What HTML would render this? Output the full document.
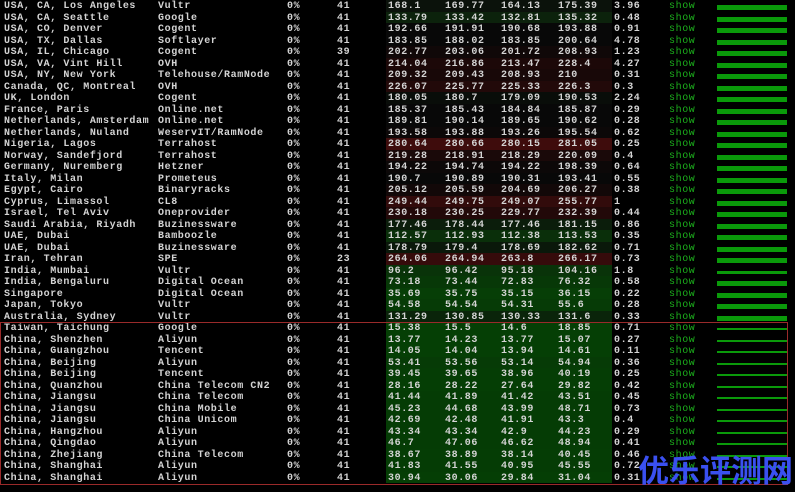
<!DOCTYPE html>
<html><head><meta charset="utf-8"><style>
body{margin:0;background:#000;width:795px;height:492px;overflow:hidden;position:relative;font-family:"Liberation Mono","DejaVu Sans Mono",monospace;font-size:10px;color:#d4d4d4;letter-spacing:0.6px;font-weight:bold}
.r{position:absolute;left:0;width:795px;height:11.5px;line-height:13px;white-space:pre}
.r span{position:absolute;top:0}
.bg{position:absolute;left:386px;width:226px;top:0;height:11.5px}
.bar{position:absolute;left:717px;width:70px;background:#0a9a0a}
.show{color:#1cb01c;font-weight:normal}
#box{position:absolute;left:0;top:322px;width:786px;height:161px;border:1px solid #9a2a2a}
#wm{position:absolute;left:638px;top:446px;font-family:"Noto Sans CJK SC",sans-serif;font-weight:bold;font-size:31px;color:#3a50f0;letter-spacing:0}
</style></head><body>
<div id="rows"></div>
<div id="box"></div>
<div id="wm">优乐评测网</div>
<script>
var d=[
["USA, CA, Los Angeles","Vultr","41","168.1","169.77","164.13","175.39","3.96","#0b120b",5],
["USA, CA, Seattle","Google","41","133.79","133.42","132.81","135.32","0.48","#0c220c",5],
["USA, CO, Denver","Cogent","41","192.66","191.91","190.68","193.88","0.91","#080808",5],
["USA, TX, Dallas","Softlayer","41","183.85","188.02","183.85","200.64","4.78","#080808",5],
["USA, IL, Chicago","Cogent","39","202.77","203.06","201.72","208.93","1.23","#100808",5],
["USA, VA, Vint Hill","OVH","41","214.04","216.86","213.47","228.4","4.27","#1c0808",5],
["USA, NY, New York","Telehouse/RamNode","41","209.32","209.43","208.93","210","0.31","#180808",5],
["Canada, QC, Montreal","OVH","41","226.07","225.77","225.33","226.3","0.3","#220909",5],
["UK, London","Cogent","41","180.05","180.7","179.09","190.53","2.24","#090d09",5],
["France, Paris","Online.net","41","185.37","185.43","184.84","185.87","0.29","#080808",5],
["Netherlands, Amsterdam","Online.net","41","189.81","190.14","189.65","190.62","0.28","#080808",5],
["Netherlands, Nuland","WeservIT/RamNode","41","193.58","193.88","193.26","195.54","0.62","#0c0808",5],
["Nigeria, Lagos","Terrahost","41","280.64","280.66","280.15","281.05","0.25","#3e0c0c",5],
["Norway, Sandefjord","Terrahost","41","219.28","218.91","218.29","220.09","0.4","#1a0909",5],
["Germany, Nuremberg","Hetzner","41","194.22","194.74","194.22","198.39","0.64","#0c0808",5],
["Italy, Milan","Prometeus","41","190.7","190.89","190.31","193.41","0.55","#080808",5],
["Egypt, Cairo","Binaryracks","41","205.12","205.59","204.69","206.27","0.38","#120808",5],
["Cyprus, Limassol","CL8","41","249.44","249.75","249.07","255.77","1","#320b0b",5],
["Israel, Tel Aviv","Oneprovider","41","230.18","230.25","229.77","232.39","0.44","#220909",5],
["Saudi Arabia, Riyadh","Buzinessware","41","177.46","178.44","177.46","181.15","0.86","#0b1d0b",5],
["UAE, Dubai","Bamboozle","41","112.57","112.93","112.38","113.53","0.35","#0a2f0a",5],
["UAE, Dubai","Buzinessware","41","178.79","179.4","178.69","182.62","0.71","#0a180a",5],
["Iran, Tehran","SPE","23","264.06","264.94","263.8","266.17","0.73","#360b0b",5],
["India, Mumbai","Vultr","41","96.2","96.42","95.18","104.16","1.8","#093309",3],
["India, Bengaluru","Digital Ocean","41","73.18","73.44","72.83","76.32","0.58","#073807",5],
["Singapore","Digital Ocean","41","35.69","35.75","35.15","36.15","0.22","#063e06",5],
["Japan, Tokyo","Vultr","41","54.58","54.54","54.31","55.6","0.28","#063b06",5],
["Australia, Sydney","Vultr","41","131.29","130.85","130.33","131.6","0.33","#0a240a",5],
["Taiwan, Taichung","Google","41","15.38","15.5","14.6","18.85","0.71","#053f05",2],
["China, Shenzhen","Aliyun","41","13.77","14.23","13.77","15.07","0.27","#053f05",2],
["China, Guangzhou","Tencent","41","14.05","14.04","13.94","14.61","0.11","#053f05",2],
["China, Beijing","Aliyun","41","53.41","53.56","53.14","54.94","0.36","#063b06",2],
["China, Beijing","Tencent","41","39.45","39.65","38.96","40.19","0.25","#053d05",2],
["China, Quanzhou","China Telecom CN2","41","28.16","28.22","27.64","29.82","0.42","#053e05",2],
["China, Jiangsu","China Telecom","41","41.44","41.89","41.42","43.51","0.45","#053c05",2],
["China, Jiangsu","China Mobile","41","45.23","44.68","43.99","48.71","0.73","#053c05",2],
["China, Jiangsu","China Unicom","41","42.69","42.48","41.91","43.3","0.4","#053c05",2],
["China, Hangzhou","Aliyun","41","43.34","43.34","42.9","44.23","0.29","#053c05",2],
["China, Qingdao","Aliyun","41","46.7","47.06","46.62","48.94","0.41","#053c05",2],
["China, Zhejiang","China Telecom","41","38.67","38.89","38.14","40.45","0.46","#053d05",2],
["China, Shanghai","Aliyun","41","41.83","41.55","40.95","45.55","0.72","#053c05",2],
["China, Shanghai","Aliyun","41","30.94","30.06","29.84","31.04","0.31","#053e05",2]];
var h="";
d.forEach(function(r,i){
var t=(i*11.5).toFixed(2);
var bt=r[9]==5?5:6;
h+='<div class="r" style="top:'+t+'px"><div class="bg" style="background:'+r[8]+'"></div>'+
'<span style="left:4px">'+r[0]+'</span><span style="left:158px">'+r[1]+'</span><span style="left:287px">0%</span>'+
'<span style="left:337px">'+r[2]+'</span><span style="left:388px">'+r[3]+'</span><span style="left:445px">'+r[4]+'</span>'+
'<span style="left:501px">'+r[5]+'</span><span style="left:558px">'+r[6]+'</span><span style="left:614px">'+r[7]+'</span>'+
'<span class="show" style="left:669px">show</span><div class="bar" style="top:'+bt+'px;height:'+r[9]+'px"></div></div>';
});
document.getElementById("rows").innerHTML=h;
</script>
</body></html>
